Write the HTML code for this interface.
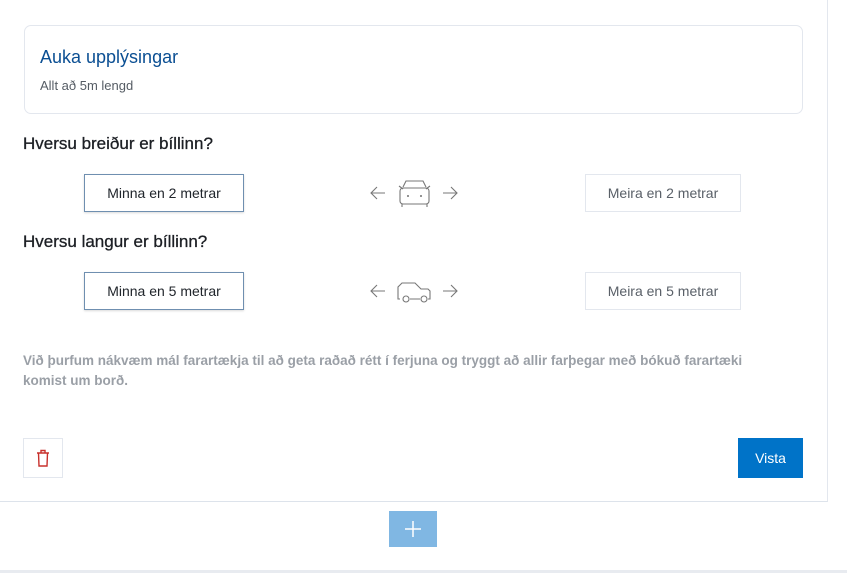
<!DOCTYPE html>
<html><head><meta charset="utf-8"><style>
*{margin:0;padding:0;box-sizing:border-box}
body{width:847px;height:573px;background:#fff;font-family:"Liberation Sans",sans-serif;position:relative;overflow:hidden}
.panel{position:absolute;left:-2px;top:-2px;width:830px;height:504px;border-right:1px solid #e3e7ee;border-bottom:1px solid #dde3eb;background:#fff}
.info{position:absolute;left:24px;top:25px;width:779px;height:89px;border:1px solid #e3e7ee;border-radius:7px}
.info h2{position:absolute;left:15px;top:21px;font-size:18px;font-weight:normal;color:#0b4f93}
.info p{position:absolute;left:15px;top:52px;font-size:13px;color:#555c64}
.q{position:absolute;left:23px;font-size:17px;color:#1c1f24;-webkit-text-stroke:0.3px #1c1f24}
.btn{position:absolute;height:38px;font-size:14px;display:flex;align-items:center;justify-content:center;color:#20252b}
.sel{left:84px;width:160px;border:1px solid #6f8fb0;box-shadow:0 1px 2px rgba(0,0,0,.15)}
.un{left:585px;width:156px;border:1px solid #e3e7ee;color:#5a6068}
.note{position:absolute;left:23px;top:351px;width:770px;font-size:13.5px;line-height:20px;color:#9a9fa6;font-weight:bold}
.del{position:absolute;left:23px;top:438px;width:40px;height:40px;border:1px solid #e3e7ee;display:flex;align-items:center;justify-content:center}
.vista{position:absolute;left:738px;top:438px;width:65px;height:40px;background:#0073c8;color:#fff;font-size:14px;display:flex;align-items:center;justify-content:center}
.plus{position:absolute;left:389px;top:511px;width:48px;height:36px;background:#80b7e3;display:flex;align-items:center;justify-content:center}
.bot{position:absolute;left:0;top:570px;width:847px;height:3px;background:#e8ebf0}
</style></head><body>
<div class="panel"></div>
<div class="info"><h2>Auka upplýsingar</h2><p>Allt að 5m lengd</p></div>
<div class="q" style="top:134px">Hversu breiður er bíllinn?</div>
<div class="btn sel" style="top:174px">Minna en 2 metrar</div>
<div class="btn un" style="top:174px">Meira en 2 metrar</div>
<svg style="position:absolute;left:368px;top:178px" width="92" height="32" fill="none" stroke="#777" stroke-width="1.1">
<path d="M17 15H3M9 9L3 15L9 21"/><path d="M75 15H89M83 9L89 15L83 21"/>
<path d="M35 9L38 3H55L58 9M31 8L35 11M62 8L58 11"/><rect x="32" y="10" width="29" height="16" rx="3"/><path d="M34 26V29M59 26V29"/>
<circle cx="40" cy="18" r=".5"/><circle cx="53" cy="18" r=".5"/></svg>
<div class="q" style="top:232px">Hversu langur er bíllinn?</div>
<div class="btn sel" style="top:272px">Minna en 5 metrar</div>
<div class="btn un" style="top:272px">Meira en 5 metrar</div>
<svg style="position:absolute;left:368px;top:276px" width="92" height="32" fill="none" stroke="#777" stroke-width="1.1">
<path d="M17 15H3M9 9L3 15L9 21"/><path d="M75 15H89M83 9L89 15L83 21"/>
<path d="M32 23H30V11L34 7H47L53 13H60L62 15V23H60M52 23H42M34 23"/><circle cx="38" cy="23" r="3"/><circle cx="56" cy="23" r="3"/></svg>
<div class="note">Við þurfum nákvæm mál farartækja til að geta raðað rétt í ferjuna og tryggt að allir farþegar með bókuð farartæki<br>komist um borð.</div>
<div class="del"><svg width="14" height="18" fill="none" stroke="#c8302c" stroke-width="1.4"><path d="M1 4H13M5 4V1.5H9V4M2.5 4L3 17H11L11.5 4"/></svg></div>
<div class="vista">Vista</div>
<div class="plus"><svg width="18" height="18" stroke="#fff" stroke-width="1.5"><path d="M9 1V17M1 9H17"/></svg></div>
<div class="bot"></div>
</body></html>
